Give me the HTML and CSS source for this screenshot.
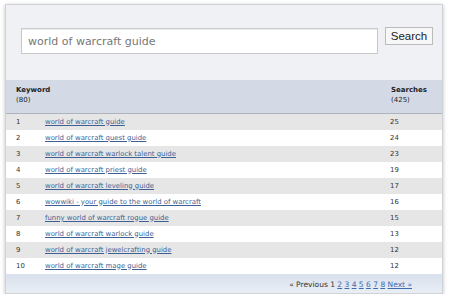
FILE: index.html
```html
<!DOCTYPE html>
<html lang="en">
<head>
    <meta charset="UTF-8">
    <title>Keyword search</title>
    <link rel="stylesheet" href="styles.css">
</head>
<body>
    <div class="panel">
        <div class="search-bar">
            <input type="text" class="search-input" value="world of warcraft guide">
            <button class="search-button">Search</button>
        </div>
        <table class="results">
            <thead>
                <tr>
                    <th class="rank" colspan="2">Keyword<span class="count">(80)</span></th>
                    <th class="searches">Searches<span class="count">(425)</span></th>
                </tr>
            </thead>
            <tbody>
                <tr><td class="rank">1</td><td><a href="#">world of warcraft guide</a></td><td class="searches">25</td></tr>
                <tr><td class="rank">2</td><td><a href="#">world of warcraft quest guide</a></td><td class="searches">24</td></tr>
                <tr><td class="rank">3</td><td><a href="#">world of warcraft warlock talent guide</a></td><td class="searches">23</td></tr>
                <tr><td class="rank">4</td><td><a href="#">world of warcraft priest guide</a></td><td class="searches">19</td></tr>
                <tr><td class="rank">5</td><td><a href="#">world of warcraft leveling guide</a></td><td class="searches">17</td></tr>
                <tr><td class="rank">6</td><td><a href="#">wowwiki - your guide to the world of warcraft</a></td><td class="searches">16</td></tr>
                <tr><td class="rank">7</td><td><a href="#">funny world of warcraft rogue guide</a></td><td class="searches">15</td></tr>
                <tr><td class="rank">8</td><td><a href="#">world of warcraft warlock guide</a></td><td class="searches">13</td></tr>
                <tr><td class="rank">9</td><td><a href="#">world of warcraft jewelcrafting guide</a></td><td class="searches">12</td></tr>
                <tr><td class="rank">10</td><td><a href="#">world of warcraft mage guide</a></td><td class="searches">12</td></tr>
            </tbody>
        </table>
        <div class="pager">
            &laquo; Previous 1
            <a href="#">2</a> <a href="#">3</a> <a href="#">4</a> <a href="#">5</a>
            <a href="#">6</a> <a href="#">7</a> <a href="#">8</a>
            <a href="#">Next &raquo;</a>
        </div>
    </div>
</body>
</html>
```

FILE: styles.css
```css
body {
    margin: 0;
    background-color: #ffffff;
    font-family: "DejaVu Sans", Verdana, sans-serif;
    color: #222;
}
.panel {
    width: 438px;
    height: 290px;
    margin: 4px 0 0 5px;
    border: 1px solid #cfd2d6;
    box-shadow: 0 1px 4px rgba(0, 0, 0, 0.25);
    background-color: #ffffff;
    display: flex;
    flex-direction: column;
    box-sizing: border-box;
}
.search-bar {
    height: 75px;
    background-color: #eff1f5;
    display: flex;
    align-items: flex-start;
    padding: 23px 9px 0 15px;
    box-sizing: border-box;
}
.search-input {
    width: 357px;
    height: 26px;
    border: 1px solid #c9c9c9;
    box-shadow: inset 0 1px 1px rgba(0, 0, 0, 0.08);
    padding: 0 0 0 6px;
    margin: 0 7px 0 0;
    font-family: inherit;
    font-size: 11px;
    color: #777;
    box-sizing: border-box;
    background-color: #ffffff;
}
.search-button {
    width: 48px;
    height: 18px;
    margin-top: -1px;
    padding: 0;
    border: 1px solid #bbbbbb;
    background-color: #f7f7f7;
    font-family: "Liberation Sans", Arial, sans-serif;
    font-size: 11.5px;
    color: #222;
}
.results {
    width: 100%;
    border-collapse: collapse;
    font-size: 6.9px;
}
.results th {
    background-color: #d3dae5;
    height: 33px;
    border-bottom: 1px solid #aeb4bd;
    text-align: left;
    font-weight: bold;
    vertical-align: top;
    padding-top: 6px;
    box-sizing: border-box;
    font-size: 7px;
}
.results .count {
    display: block;
    font-weight: normal;
    margin-top: 2px;
}
.results td {
    height: 16px;
    padding: 0;
    color: #333;
}
.results tbody tr:nth-child(odd) td {
    background-color: #e6e6e6;
}
.results .rank {
    width: 29px;
    padding-left: 10px;
}
.results .searches {
    width: 52px;
}
.results a {
    color: #3d5f94;
}
.pager {
    flex: 1;
    background: linear-gradient(#d9e1ec, #e9eef5);
    text-align: right;
    padding: 6px 30px 0 0;
    font-size: 7.5px;
    color: #333;
}
.pager a {
    color: #3d6bb0;
}
```
